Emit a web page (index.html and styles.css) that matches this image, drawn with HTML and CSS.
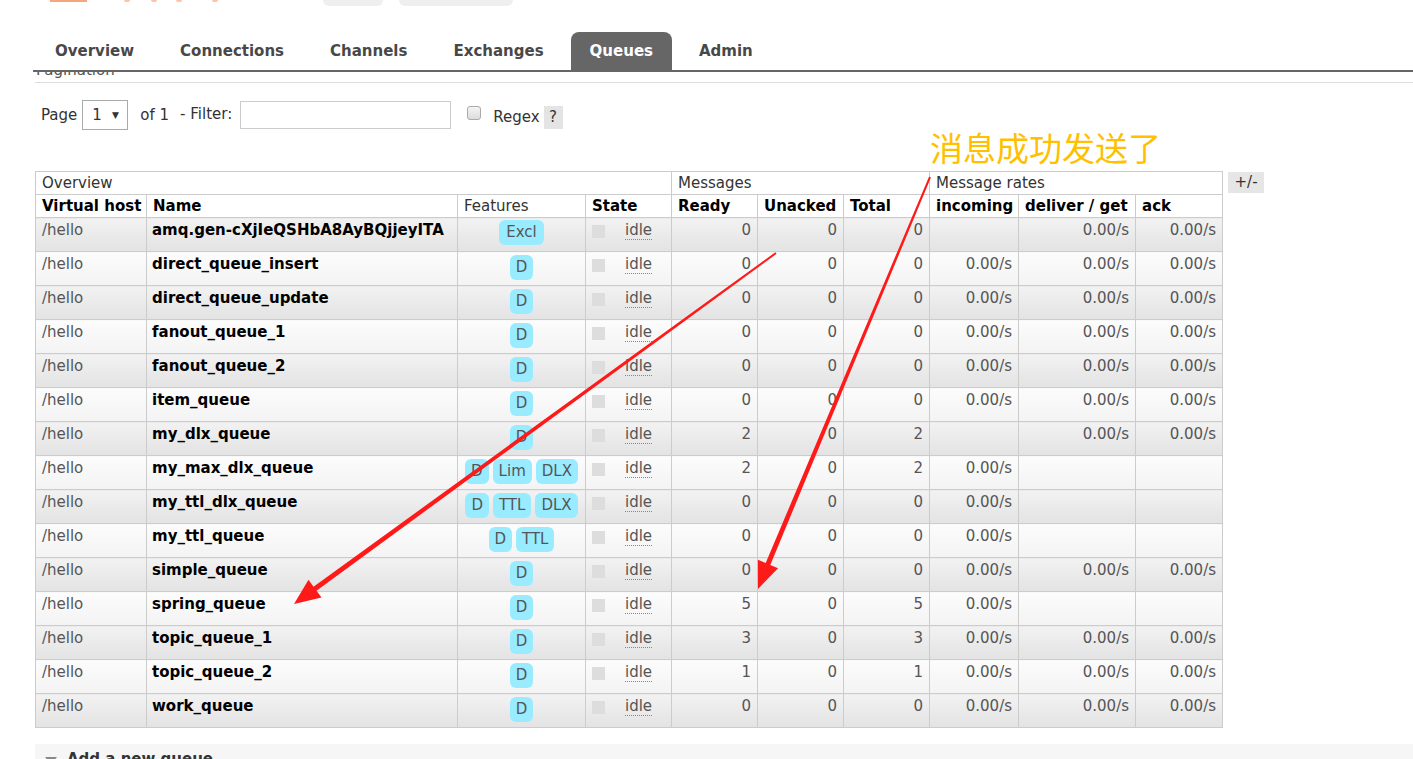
FILE: index.html
```html
<!DOCTYPE html>
<html>
<head>
<meta charset="utf-8">
<title>RabbitMQ Management - Queues</title>
<link rel="stylesheet" href="styles.css">
</head>
<body>
<div class="page">
  <div class="brandstrip">
    <span class="logo-bar"></span>
    <span class="logo-dot dot1"></span>
    <span class="logo-dot dot2"></span>
    <span class="logo-dot dot3"></span>
    <span class="logo-dot dot4"></span>
    <span class="pill pill1"></span>
    <span class="pill pill2"></span>
  </div>
  <ul class="tabs">
    <li class="tab">Overview</li>
    <li class="tab">Connections</li>
    <li class="tab">Channels</li>
    <li class="tab">Exchanges</li>
    <li class="tab active">Queues</li>
    <li class="tab">Admin</li>
  </ul>
  <div class="main">
    <h2 class="section-title"><span class="section-text">Pagination</span></h2>
    <div class="pager">
      <span class="lbl lbl-page">Page</span>
      <span class="select"><span class="sel-val">1</span><span class="sel-arrow">▼</span></span>
      <span class="lbl lbl-of">of 1</span>
      <span class="lbl lbl-filter">- Filter:</span>
      <span class="input"></span>
      <span class="checkbox"></span>
      <span class="lbl lbl-regex">Regex</span>
      <span class="help">?</span>
    </div>
    <div class="table-wrap">
      <table class="queues">
        <colgroup>
          <col class="c-vhost"><col class="c-name"><col class="c-feat"><col class="c-state">
          <col class="c-num"><col class="c-num"><col class="c-num">
          <col class="c-inc"><col class="c-del"><col class="c-ack">
        </colgroup>
        <thead>
          <tr class="group-row">
            <th colspan="4">Overview</th>
            <th colspan="3">Messages</th>
            <th colspan="3">Message rates</th>
          </tr>
          <tr class="head-row">
            <th>Virtual host</th><th>Name</th><th class="normal">Features</th><th>State</th>
            <th>Ready</th><th>Unacked</th><th>Total</th>
            <th>incoming</th><th>deliver / get</th><th>ack</th>
          </tr>
        </thead>
        <tbody>
          <tr class="alt1"><td>/hello</td><td class="name">amq.gen-cXjIeQSHbA8AyBQjjeyITA</td><td class="feat"><span class="badge b-top">Excl</span></td><td class="state"><span class="sq"></span><abbr>idle</abbr></td><td class="num">0</td><td class="num">0</td><td class="num">0</td><td class="num"></td><td class="num">0.00/s</td><td class="num">0.00/s</td></tr>
          <tr class="alt2"><td>/hello</td><td class="name">direct_queue_insert</td><td class="feat"><span class="badge">D</span></td><td class="state"><span class="sq"></span><abbr>idle</abbr></td><td class="num">0</td><td class="num">0</td><td class="num">0</td><td class="num">0.00/s</td><td class="num">0.00/s</td><td class="num">0.00/s</td></tr>
          <tr class="alt1"><td>/hello</td><td class="name">direct_queue_update</td><td class="feat"><span class="badge">D</span></td><td class="state"><span class="sq"></span><abbr>idle</abbr></td><td class="num">0</td><td class="num">0</td><td class="num">0</td><td class="num">0.00/s</td><td class="num">0.00/s</td><td class="num">0.00/s</td></tr>
          <tr class="alt2"><td>/hello</td><td class="name">fanout_queue_1</td><td class="feat"><span class="badge">D</span></td><td class="state"><span class="sq"></span><abbr>idle</abbr></td><td class="num">0</td><td class="num">0</td><td class="num">0</td><td class="num">0.00/s</td><td class="num">0.00/s</td><td class="num">0.00/s</td></tr>
          <tr class="alt1"><td>/hello</td><td class="name">fanout_queue_2</td><td class="feat"><span class="badge">D</span></td><td class="state"><span class="sq"></span><abbr>idle</abbr></td><td class="num">0</td><td class="num">0</td><td class="num">0</td><td class="num">0.00/s</td><td class="num">0.00/s</td><td class="num">0.00/s</td></tr>
          <tr class="alt2"><td>/hello</td><td class="name">item_queue</td><td class="feat"><span class="badge">D</span></td><td class="state"><span class="sq"></span><abbr>idle</abbr></td><td class="num">0</td><td class="num">0</td><td class="num">0</td><td class="num">0.00/s</td><td class="num">0.00/s</td><td class="num">0.00/s</td></tr>
          <tr class="alt1"><td>/hello</td><td class="name">my_dlx_queue</td><td class="feat"><span class="badge">D</span></td><td class="state"><span class="sq"></span><abbr>idle</abbr></td><td class="num">2</td><td class="num">0</td><td class="num">2</td><td class="num"></td><td class="num">0.00/s</td><td class="num">0.00/s</td></tr>
          <tr class="alt2"><td>/hello</td><td class="name">my_max_dlx_queue</td><td class="feat"><span class="badge">D</span><span class="badge">Lim</span><span class="badge">DLX</span></td><td class="state"><span class="sq"></span><abbr>idle</abbr></td><td class="num">2</td><td class="num">0</td><td class="num">2</td><td class="num">0.00/s</td><td class="num"></td><td class="num"></td></tr>
          <tr class="alt1"><td>/hello</td><td class="name">my_ttl_dlx_queue</td><td class="feat"><span class="badge">D</span><span class="badge">TTL</span><span class="badge">DLX</span></td><td class="state"><span class="sq"></span><abbr>idle</abbr></td><td class="num">0</td><td class="num">0</td><td class="num">0</td><td class="num">0.00/s</td><td class="num"></td><td class="num"></td></tr>
          <tr class="alt2"><td>/hello</td><td class="name">my_ttl_queue</td><td class="feat"><span class="badge">D</span><span class="badge">TTL</span></td><td class="state"><span class="sq"></span><abbr>idle</abbr></td><td class="num">0</td><td class="num">0</td><td class="num">0</td><td class="num">0.00/s</td><td class="num"></td><td class="num"></td></tr>
          <tr class="alt1"><td>/hello</td><td class="name">simple_queue</td><td class="feat"><span class="badge">D</span></td><td class="state"><span class="sq"></span><abbr>idle</abbr></td><td class="num">0</td><td class="num">0</td><td class="num">0</td><td class="num">0.00/s</td><td class="num">0.00/s</td><td class="num">0.00/s</td></tr>
          <tr class="alt2"><td>/hello</td><td class="name">spring_queue</td><td class="feat"><span class="badge">D</span></td><td class="state"><span class="sq"></span><abbr>idle</abbr></td><td class="num">5</td><td class="num">0</td><td class="num">5</td><td class="num">0.00/s</td><td class="num"></td><td class="num"></td></tr>
          <tr class="alt1"><td>/hello</td><td class="name">topic_queue_1</td><td class="feat"><span class="badge">D</span></td><td class="state"><span class="sq"></span><abbr>idle</abbr></td><td class="num">3</td><td class="num">0</td><td class="num">3</td><td class="num">0.00/s</td><td class="num">0.00/s</td><td class="num">0.00/s</td></tr>
          <tr class="alt2"><td>/hello</td><td class="name">topic_queue_2</td><td class="feat"><span class="badge">D</span></td><td class="state"><span class="sq"></span><abbr>idle</abbr></td><td class="num">1</td><td class="num">0</td><td class="num">1</td><td class="num">0.00/s</td><td class="num">0.00/s</td><td class="num">0.00/s</td></tr>
          <tr class="alt1"><td>/hello</td><td class="name">work_queue</td><td class="feat"><span class="badge">D</span></td><td class="state"><span class="sq"></span><abbr>idle</abbr></td><td class="num">0</td><td class="num">0</td><td class="num">0</td><td class="num">0.00/s</td><td class="num">0.00/s</td><td class="num">0.00/s</td></tr>
        </tbody>
      </table>
      <span class="plusminus">+/-</span>
    </div>
    <div class="add-section"><span class="tri"></span><span class="add-text">Add a new queue</span></div>
  </div>
</div>

<div class="annot-text">消息成功发送了</div>
<svg class="annot" width="1413" height="759" viewBox="0 0 1413 759" xmlns="http://www.w3.org/2000/svg">
  <polygon fill="#ff1a1a" points="776.6,253.8 316.5,590.7 321.5,597.6 294,604 308.5,579.8 313.5,586.7 775.4,252.2"/>
  <polygon fill="#ff1a1a" points="930.9,177.4 770.3,565.0 778.1,568.2 758,589 757.9,559.8 765.7,563.0 929.1,176.6"/>
</svg>
</body>
</html>
```

FILE: styles.css
```css
html, body {
  margin: 0;
  padding: 0;
  background: #fff;
}
body {
  font-family: "DejaVu Sans", Verdana, sans-serif;
  font-size: 15px;
  color: #333;
  overflow: hidden;
  width: 1413px;
  height: 759px;
  position: relative;
}
.page {
  width: 1413px;
}

/* top strip (cut off logo) */
.brandstrip {
  height: 6px;
  display: flex;
  align-items: flex-start;
  overflow: hidden;
}
.logo-bar {
  margin-left: 50px;
  width: 37px;
  height: 2px;
  background: #f7a57c;
}
.logo-dot {
  width: 6px;
  height: 2px;
  border-radius: 0 0 3px 3px;
  background: #fbc4a6;
}
.dot1 { margin-left: 37px; }
.dot2 { margin-left: 21px; }
.dot3 { margin-left: 19px; }
.dot4 { margin-left: 30px; }
.pill {
  height: 6px;
  background: #efefef;
  border-radius: 0 0 6px 6px;
}
.pill1 { margin-left: 105px; width: 60px; }
.pill2 { margin-left: 16px; width: 114px; }

/* tabs */
.tabs {
  list-style: none;
  margin: 26px 0 0 33px;
  padding: 0 0 0 3px;
  display: flex;
  border-bottom: 2px solid #666;
  height: 38px;
}
.tab {
  height: 38px;
  line-height: 39px;
  padding: 0 19px;
  margin-right: 8px;
  font-weight: bold;
  font-size: 15px;
  color: #484848;
  border-radius: 8px 8px 0 0;
}
.tab.active {
  background: #666;
  color: #fff;
}

.main {
  margin-left: 35px;
}

/* clipped section heading */
.section-title {
  margin: 0;
  height: 10px;
  overflow: hidden;
  border-bottom: 1px solid #ddd;
  font-weight: normal;
  font-size: 15px;
}
.section-text {
  display: block;
  margin-top: -11px;
  margin-left: 1px;
  line-height: 18px;
  color: #555;
}

/* pagination */
.pager {
  margin-top: 17px;
  height: 30px;
  display: flex;
  align-items: center;
  font-size: 15px;
  color: #333;
}
.lbl-page { margin-left: 6px; }
.select {
  margin-left: 5px;
  width: 44px;
  height: 28px;
  border: 1px solid #aaa;
  background: #fff;
  display: flex;
  align-items: center;
  box-sizing: content-box;
}
.sel-val { margin-left: 9px; }
.sel-arrow { margin-left: 10px; font-size: 9px; color: #333; }
.lbl-of { margin-left: 12px; }
.lbl-filter { margin-left: 11px; margin-top: -2px; }
.input {
  margin-left: 8px;
  width: 209px;
  height: 26px;
  border: 1px solid #ccc;
  background: #fff;
}
.checkbox {
  margin-left: 16px;
  margin-top: -4px;
  width: 12px;
  height: 12px;
  border: 1px solid #aaa;
  border-radius: 3px;
  background: linear-gradient(#f4f4f4, #dcdcdc);
}
.lbl-regex { margin-left: 12px; margin-top: 4px; }
.help {
  margin-left: 4px;
  margin-top: 4px;
  width: 19px;
  height: 23px;
  line-height: 23px;
  text-align: center;
  background: #e4e4e4;
  color: #333;
}

/* table */
.table-wrap {
  margin-top: 41px;
  display: flex;
  align-items: flex-start;
  gap: 5px;
}
.queues {
  border-collapse: collapse;
  table-layout: fixed;
  width: 1187px;
  font-size: 15px;
}
.c-vhost { width: 111px; }
.c-name { width: 311px; }
.c-feat { width: 128px; }
.c-state { width: 86px; }
.c-num { width: 86px; }
.c-inc { width: 89px; }
.c-del { width: 117px; }
.c-ack { width: 87px; }

.queues th {
  border: 1px solid #ccc;
  text-align: left;
  padding: 0 6px;
  height: 22px;
  line-height: 22px;
  white-space: nowrap;
  color: #000;
  background: #fff;
}
.group-row th {
  font-weight: normal;
  color: #333;
}
.head-row th {
  font-weight: bold;
}
.head-row th.normal {
  font-weight: normal;
  color: #333;
}
.queues td {
  border: 1px solid #ccc;
  padding: 3px 6px 0;
  height: 30px;
  vertical-align: top;
  line-height: 19px;
  color: #555;
  white-space: nowrap;
  overflow: hidden;
}
.alt1 td {
  background: linear-gradient(#f2f2f2, #e3e3e3);
}
.alt2 td {
  background: linear-gradient(#fcfcfc, #f3f3f3);
}
.queues td.name {
  font-weight: bold;
  color: #000;
  padding-left: 5px;
}
.queues td.num {
  text-align: right;
}
.queues td.feat {
  text-align: center;
  padding: 1px 0 0;
  font-size: 0;
}
.badge {
  display: inline-block;
  height: 25px;
  line-height: 25px;
  padding: 0 6px;
  margin: 0 2px;
  border-radius: 6px;
  background: #99ebff;
  color: #555;
  font-size: 15px;
  vertical-align: top;
  margin-top: 2px;
}
.badge.b-top {
  margin-top: 1px;
  padding: 0 7px;
}
.queues td.state {
  padding-left: 6px;
}
.sq {
  display: inline-block;
  width: 13px;
  height: 13px;
  background: #ddd;
  vertical-align: top;
  margin-top: 4px;
  margin-right: 20px;
}
.state abbr {
  text-decoration: none;
  border-bottom: 1px dotted #888;
  color: #555;
}

.plusminus {
  margin-top: 1px;
  width: 36px;
  height: 21px;
  line-height: 21px;
  text-align: center;
  background: #e6e6e6;
  color: #333;
  font-size: 15px;
}

/* add a new queue */
.add-section {
  margin-top: 16px;
  height: 40px;
  background: #f6f6f6;
  padding: 6px 0 0 10px;
  box-sizing: border-box;
  display: flex;
  align-items: flex-start;
}
.tri {
  width: 0;
  height: 0;
  border-left: 6px solid transparent;
  border-right: 6px solid transparent;
  border-top: 7px solid #888;
  margin-top: 7px;
}
.add-text {
  margin-left: 10px;
  font-weight: bold;
  color: #333;
}

/* annotations */
.annot-text {
  position: absolute;
  left: 930px;
  top: 125px;
  font-family: "Noto Sans CJK SC", sans-serif;
  font-size: 33px;
  line-height: 44px;
  color: #ffc000;
  white-space: nowrap;
}
.annot {
  position: absolute;
  left: 0;
  top: 0;
  pointer-events: none;
}
```
